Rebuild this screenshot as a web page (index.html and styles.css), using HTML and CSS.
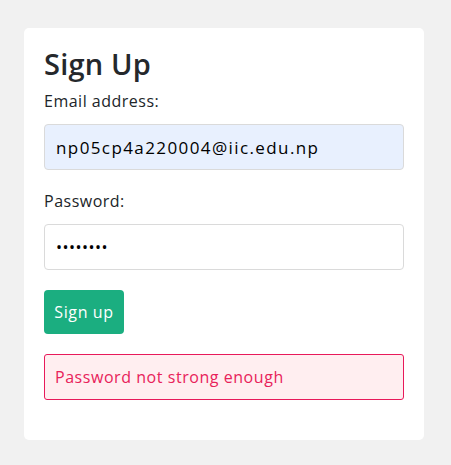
FILE: index.html
```html
<!DOCTYPE html>
<html lang="en">
<head>
<meta charset="utf-8">
<title>Sign Up</title>
<link rel="stylesheet" href="styles.css">
</head>
<body>
<div class="card">
  <h2 class="title">Sign Up</h2>
  <form class="form">
    <div class="group">
      <label class="label" for="email">Email address:</label>
      <input class="input input-filled" id="email" type="email" value="np05cp4a220004@iic.edu.np">
    </div>
    <div class="group group-last">
      <label class="label" for="password">Password:</label>
      <input class="input input-pass" id="password" type="password" value="12345678">
    </div>
    <button class="btn" type="button">Sign up</button>
    <div class="error">Password not strong enough</div>
  </form>
</div>
</body>
</html>
```
FILE: styles.css
```css
* { box-sizing: border-box; }
html, body { margin: 0; padding: 0; }
body {
  background: #f1f1f1;
  font-family: "Open Sans", "DejaVu Sans", sans-serif;
  color: #212529;
  padding: 28px 0 0 24px;
}
.card {
  width: 400px;
  background: #fff;
  border-radius: 5px;
  padding: 20px 20px 40px;
}
.title {
  margin: 0 0 9px;
  font-size: 29px;
  font-weight: 600;
  line-height: 32px;
  letter-spacing: 0.2px;
  color: #25282c;
}
.form { display: flex; flex-direction: column; align-items: flex-start; margin: 0; }
.group { display: flex; flex-direction: column; width: 100%; margin-bottom: 19px; }
.group-last { margin-bottom: 20px; }
.label {
  font-size: 16px;
  line-height: 24px;
  margin-bottom: 11px;
  letter-spacing: 0.5px;
  color: #212529;
}
.input {
  height: 46px;
  width: 100%;
  border: 1px solid #dadada;
  border-radius: 4px;
  padding: 0 11px;
  font-family: inherit;
  font-size: 17px;
  letter-spacing: 1.4px;
  color: #000;
  background: #fff;
  outline: none;
}
.input-pass { letter-spacing: 0.5px; font-size: 16px; }
.input-filled { background: #e8f0fe; }
.btn {
  height: 44px;
  width: 80px;
  border: none;
  border-radius: 4px;
  background: #1bae80;
  color: #fff;
  font-family: inherit;
  font-size: 16px;
  letter-spacing: 0.6px;
  padding: 0;
  margin-bottom: 20px;
}
.error {
  width: 100%;
  height: 46px;
  border: 1px solid #e8195a;
  border-radius: 3px;
  background: #ffeef0;
  color: #e8225a;
  font-size: 16px;
  line-height: 44px;
  letter-spacing: 0.55px;
  padding-left: 10px;
}
```
